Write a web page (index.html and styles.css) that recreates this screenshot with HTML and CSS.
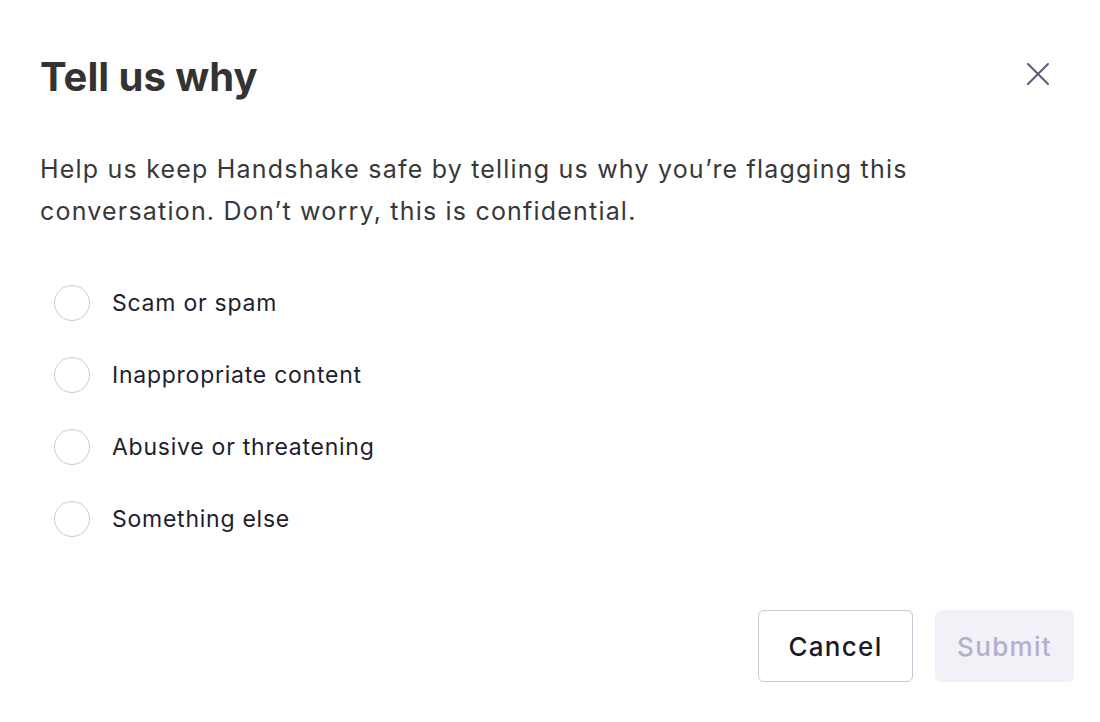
FILE: index.html
```html
<!DOCTYPE html>
<html>
<head>
<meta charset="utf-8">
<link rel="stylesheet" href="styles.css">
</head>
<body>
<div class="modal">
  <div class="header">
    <h1 class="title">Tell us why</h1>
    <button class="close" aria-label="Close">
      <svg width="22" height="22" viewBox="0 0 22 22"><path d="M1 1L21 21M21 1L1 21" stroke="#5d5b7c" stroke-width="2" fill="none" stroke-linecap="round"/></svg>
    </button>
  </div>
  <p class="desc">Help us keep Handshake safe by telling us why you’re flagging this conversation. Don’t worry, this is confidential.</p>
  <div class="options">
    <label class="option"><span class="radio"></span><span class="label">Scam or spam</span></label>
    <label class="option"><span class="radio"></span><span class="label">Inappropriate content</span></label>
    <label class="option"><span class="radio"></span><span class="label">Abusive or threatening</span></label>
    <label class="option"><span class="radio"></span><span class="label">Something else</span></label>
  </div>
  <div class="footer">
    <button class="btn cancel">Cancel</button>
    <button class="btn submit">Submit</button>
  </div>
</div>
</body>
</html>
```
FILE: styles.css
```css
html, body { margin: 0; padding: 0; background: #fff; }
body { font-family: Inter, "Noto Sans", sans-serif; }
.modal { width: 1100px; height: 722px; box-sizing: border-box; padding: 50px 26px 0 40px; }
.header { display: flex; justify-content: space-between; align-items: center; height: 52px; }
.title { margin: 0; font-size: 40px; font-weight: 700; color: #333333; letter-spacing: 0; }
.close { border: 0; background: none; padding: 0; margin: 0 25px 0 0; width: 22px; height: 22px; display: flex; align-self: flex-start; margin-top: 13px; }
.desc { margin: 46px 0 0; font-size: 25px; line-height: 42px; letter-spacing: 1.2px; color: #383838; width: 900px; }
.options { margin-top: 53px; display: flex; flex-direction: column; gap: 36px; padding-left: 14px; }
.option { display: flex; align-items: center; height: 36px; gap: 22px; }
.radio { width: 34px; height: 34px; border: 1px solid #cac7de; border-radius: 50%; flex: none; }
.label { font-size: 23px; letter-spacing: 0.75px; color: #1f1e2e; }
.footer { display: flex; justify-content: flex-end; gap: 22px; margin-top: 73px; }
.btn { font-family: Inter, sans-serif; font-size: 26px; font-weight: 500; letter-spacing: 1.3px; height: 72px; border-radius: 6px; }
.cancel { width: 155px; background: #fff; border: 1px solid #c9c7d6; color: #1b1a28; }
.submit { width: 139px; background: #f1f1f8; border: 1px solid #f1f1f8; color: #b1b0cd; }
```
